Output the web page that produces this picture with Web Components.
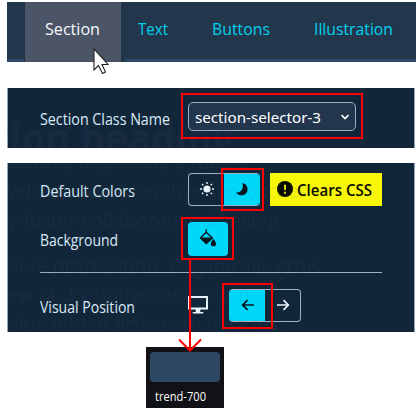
<!DOCTYPE html>
<html lang="en">
<head>
<meta charset="utf-8">
<title>Section settings</title>
<style>
body{margin:0;background:#fff;font-family:"Open Sans","Noto Sans",sans-serif}
</style>
</head>
<body>
<settings-guide></settings-guide>
<script>
const define = (name, html, after) => customElements.define(name, class extends HTMLElement {
  constructor(){
    super();
    const t = document.createElement('template');
    t.innerHTML = html;
    this.attachShadow({mode:'open'}).append(t.content.cloneNode(true));
  }
  connectedCallback(){ if(after) after(this); }
});

/* One line of text condensed to a given width. */
define('fit-text', `<style>
:host{display:inline-block;white-space:nowrap;line-height:24px;height:24px;flex:none}
span{display:inline-block;transform-origin:0 50%}
</style><span><slot></slot></span>`, el => {
  const w = +el.getAttribute('w'), s = el.shadowRoot.querySelector('span');
  el.style.width = w + 'px';
  s.style.transform = 'scaleX(' + w / s.getBoundingClientRect().width + ')';
});

define('nav-tab', `<style>
:host{display:flex;box-sizing:border-box;height:60px;padding-top:15px;color:#00d2f0;font-size:17px;border-bottom:3px solid #2d4766;flex:none}
:host([active]){background:#4b5567;color:#f8fafc;border-bottom:0}
</style><slot></slot>`);

define('tab-bar', `<style>
:host{display:flex;box-sizing:border-box;width:409px;height:60px;background:#22364c}
i{flex:none;box-sizing:border-box;height:60px}
.a{width:17px;border-bottom:3px solid #2d4766}.g{width:1px}.h{width:4px}
.s{width:96px;padding-left:20px}.t{width:87px;padding-left:13px}.b{width:102px;padding-left:0}.l{width:102px;padding-left:0}
</style>
<i class="a"></i><i class="g"></i>
<nav-tab class="s" active><fit-text w="55">Section</fit-text></nav-tab><i class="h"></i>
<nav-tab class="t"><fit-text w="30">Text</fit-text></nav-tab>
<nav-tab class="b"><fit-text w="58">Buttons</fit-text></nav-tab>
<nav-tab class="l"><fit-text w="79">Illustration</fit-text></nav-tab>`);

define('form-panel', `<style>
:host{display:block;box-sizing:border-box;width:408px;background:#12263a;border:solid #8fa3ba;border-width:0 1px;padding:0 32px;color:#d9ebf7;font-size:15.5px}
</style><slot></slot>`);

define('form-row', `<style>
:host{display:grid;grid-template-columns:148px auto;align-items:center}
.c{display:flex;align-items:center}
::slotted([slot=label]){margin-top:2px}
</style><slot name="label"></slot><div class="c"><slot></slot></div>`);

define('class-select', `<style>
:host{display:flex;box-sizing:border-box;width:168px;height:29px;border:1px solid #9db0c6;border-radius:5px;background:#22364e;color:#fff;font:400 15px "Noto Sans",sans-serif;align-items:center;padding:0 5px 0 6px;justify-content:space-between}
</style><slot></slot><svg width="10" height="8" viewBox="0 0 10 8"><path d="M1.5 2 5 5.5 8.5 2" fill="none" stroke="#fff" stroke-width="1.7"/></svg>`);

define('toggle-pair', `<style>
:host{display:flex;box-sizing:border-box;width:72px;height:33px;border:1px solid #9db0c6;border-radius:4px;overflow:hidden;flex:none}
:host([on=left]){border-left-color:#00d8fa;background:linear-gradient(90deg,#00d8fa 50%,transparent 50%) border-box}
:host([on=right]){border-right-color:#00d8fa}
::slotted(*){flex:1}
</style><slot></slot>`);

define('icon-cell', `<style>
:host{display:flex;align-items:center;justify-content:center;color:#e8f3fb}
:host([on]){background:#00d8fa;color:#06141d}
svg{display:block;flex:none;overflow:visible;position:relative;top:-1px}
</style><svg></svg>`, el => {
  const icons = {
    sun:[16,'<circle cx="8" cy="8" r="3.600" fill="currentColor"/><path d="M8 1v2M8 13v2M1 8h2M13 8h2M3 3l1.300 1.300M11.700 11.700 13 13M3 13l1.300-1.300M11.700 4.300 13 3" stroke="currentColor" stroke-width="1.400"/>'],
    moon:[16,'<path d="M8.300 2a6.200 6.200 0 1 1-6.300 9.200c4.800 1.200 8.200-3.600 6.300-9.200z" fill="currentColor"/>'],
    left:[16,'<path d="M14 8H3M7.500 3.200 2.700 8l4.800 4.800" fill="none" stroke="currentColor" stroke-width="1.700"/>'],
    right:[16,'<path d="M2 8h11M8.500 3.200 13.300 8l-4.800 4.800" fill="none" stroke="currentColor" stroke-width="1.700"/>'],
    fill:[18,'<path d="M7.200 0v3.500" stroke="currentColor" stroke-width="1.200"/><path d="M7.200 3.200 1.500 9 7.300 14.500 13.300 9z" fill="none" stroke="currentColor" stroke-width="1.400"/><path d="M1.200 8.500h12.200l-6 6.500z" fill="currentColor"/><path d="M14.400 9.800c1.500 2.300 2.600 3.700 2.600 4.900a2.600 2.600 0 0 1-5.200 0c0-1.200 1.100-2.600 2.600-4.900z" fill="currentColor"/>'],
    screen:[20,'<path d="M1 2h18v11.500H1z" fill="none" stroke="currentColor" stroke-width="2"/><path d="M7.700 14h4.600v3h3v1.600H4.700V17h3z" fill="currentColor"/>'],
    warn:[16,'<circle cx="8" cy="8" r="8" fill="#080a00"/><path d="M8 3.700v5.400M8 10.700v2" stroke="#f7f500" stroke-width="1.800"/>']
  };
  const [n, p] = icons[el.getAttribute('icon')], s = el.shadowRoot.querySelector('svg');
  s.setAttribute('width', n); s.setAttribute('height', n); s.setAttribute('viewBox', `0 0 ${n} ${n}`);
  s.innerHTML = p;
});

define('notice-badge', `<style>
:host{display:flex;box-sizing:border-box;width:112px;height:33px;background:#f7f707;color:#080a00;align-items:center;padding-left:6.5px;gap:4.5px;font-size:15.5px;font-weight:600;margin-left:10px;flex:none}
</style><slot></slot>`);

define('colour-swatch', `<style>
:host{display:block;box-sizing:border-box;width:78px;height:61px;background:#111216;padding:5px 4px 0;color:#fff;font-size:12px}
div{height:30px;border-radius:4px;background:#2e4763}
p{margin:3px 0 0 5px;height:24px;display:flex}
</style><div></div><p><slot></slot></p>`);

/* Faint page copy showing through a panel. */
define('ghost-copy', `<style>
:host{position:absolute;inset:0;overflow:hidden;color:rgba(92,90,122,.11);font-size:20.5px;pointer-events:none}
</style><slot></slot>`);

define('settings-guide', `<style>
:host{display:block;position:relative;width:418px;height:409px;overflow:hidden;padding:2px 0 0 7px;box-sizing:border-box}
.two,.three{position:relative;width:408px}
.two{margin-top:26px}.three{margin-top:15px}
.two form-panel{height:60px;padding-top:14px}
.three form-panel{height:169px;padding-top:10px}
.two fit-text[slot]{margin-top:5px}
.bg{margin-top:16px;height:34px}
.pos{margin-top:16px}
hr{width:342px;height:1px;border:0;margin:16px 0 0;background:#9db0c6}
.bucket{width:40px;height:34px;border-radius:4px}
.screen{width:20px;margin-right:21px}
colour-swatch{margin:15px 0 0 139px}
ghost-copy fit-text{position:absolute;line-height:28px;height:28px}
ghost-copy .h{font-size:42px;font-weight:700;line-height:60px;height:60px}
.marks{position:absolute;left:0;top:0}
</style>
<tab-bar></tab-bar>
<div class="two"><form-panel><form-row>
<fit-text slot="label" w="130">Section Class Name</fit-text>
<class-select><fit-text w="126">section-selector-3</fit-text></class-select>
</form-row></form-panel>
<ghost-copy><fit-text class="h" w="241" style="left:-14px;top:19px">tion heading</fit-text></ghost-copy></div>
<div class="three"><form-panel>
<form-row><fit-text slot="label" w="95">Default Colors</fit-text>
<toggle-pair on="right"><icon-cell icon="sun"></icon-cell><icon-cell icon="moon" on></icon-cell></toggle-pair>
<notice-badge><icon-cell icon="warn"></icon-cell><fit-text w="75">Clears CSS</fit-text></notice-badge></form-row>
<form-row class="bg"><fit-text slot="label" w="78">Background</fit-text><icon-cell class="bucket" icon="fill" on></icon-cell></form-row>
<hr>
<form-row class="pos"><fit-text slot="label" w="95">Visual Position</fit-text>
<icon-cell class="screen" icon="screen"></icon-cell>
<toggle-pair on="left"><icon-cell icon="left" on></icon-cell><icon-cell icon="right"></icon-cell></toggle-pair></form-row>
</form-panel>
<ghost-copy>
<fit-text w="241" style="left:1px;top:-16px">eworks to provide a robust</fit-text>
<fit-text w="300" style="left:0;top:13px">vel overviews. Iterative approaches</fit-text>
<fit-text w="276" style="left:1px;top:42px">y foster collaborative thinking.</fit-text>
<fit-text w="314" style="left:1px;top:88px">alue proposition. Organically grow</fit-text>
<fit-text w="247" style="left:1px;top:117px">ew of disruptive innovation.</fit-text>
<fit-text w="283" style="left:1px;top:146px">alue added activity to beta test.</fit-text>
</ghost-copy></div>
<colour-swatch><fit-text w="51">trend-700</fit-text></colour-swatch>
<svg class="marks" width="418" height="409" viewBox="0 0 418 409">
<g fill="none" stroke="#f00" stroke-width="2"><path d="M182 94h180v44H182zM222 169h41v41h-41zM182 218h51v41h-51zM223 284h49v44h-49z"/><path d="M190 260v90M179 339.500l11 11 11-11"/></g>
<path d="M94 49v21l4.500-4.500 4 8 3-1.500-3.500-7.500h6z" fill="#fff" stroke="#222" stroke-width="1.100"/>
</svg>`);
</script>
</body>
</html>
